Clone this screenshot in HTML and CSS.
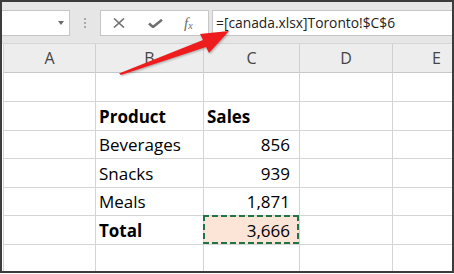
FILE: index.html
```html
<!DOCTYPE html>
<html>
<head>
  <meta charset="utf-8" />
  <title>Excel - external reference</title>
  <link rel="stylesheet" href="styles.css">
</head>
<body>
  <div class="window">
    <div class="formula-bar">
      <div class="name-box"><span class="caret"></span></div>
      <div class="grip"><i></i><i></i><i></i></div>
      <div class="fx-buttons">
        <svg class="icon-x" width="12" height="10" viewBox="0 0 12 10">
          <path d="M1 0.5 L11 9.5 M11 0.5 L1 9.5" />
        </svg>
        <svg class="icon-check" width="15" height="9" viewBox="0 0 15 9">
          <path d="M1 4.5 L5 8 L14 0.8" />
        </svg>
        <span class="fx">f<sub>x</sub></span>
      </div>
      <div class="formula">=[canada.xlsx]Toronto!$C$6</div>
    </div>

    <div class="sheet">
      <div class="row head">
        <div class="cell">A</div>
        <div class="cell">B</div>
        <div class="cell">C</div>
        <div class="cell">D</div>
        <div class="cell">E</div>
      </div>
      <div class="row">
        <div class="cell"></div><div class="cell"></div><div class="cell"></div><div class="cell"></div><div class="cell"></div>
      </div>
      <div class="row">
        <div class="cell"></div>
        <div class="cell bold">Product</div>
        <div class="cell bold">Sales</div>
        <div class="cell"></div><div class="cell"></div>
      </div>
      <div class="row short">
        <div class="cell"></div>
        <div class="cell">Beverages</div>
        <div class="cell num">856</div>
        <div class="cell"></div><div class="cell"></div>
      </div>
      <div class="row">
        <div class="cell"></div>
        <div class="cell">Snacks</div>
        <div class="cell num">939</div>
        <div class="cell"></div><div class="cell"></div>
      </div>
      <div class="row short">
        <div class="cell"></div>
        <div class="cell">Meals</div>
        <div class="cell num">1,871</div>
        <div class="cell"></div><div class="cell"></div>
      </div>
      <div class="row">
        <div class="cell"></div>
        <div class="cell bold">Total</div>
        <div class="cell num selected">3,666</div>
        <div class="cell"></div><div class="cell"></div>
      </div>
      <div class="row">
        <div class="cell"></div><div class="cell"></div><div class="cell"></div><div class="cell"></div><div class="cell"></div>
      </div>
    </div>

    <svg class="arrow" width="454" height="274" viewBox="0 0 454 274">
      <polygon points="119,73.5 203,40 200,34 229,31 209,53 206,47 121,75" />
    </svg>
  </div>
</body>
</html>
```

FILE: styles.css
```css
* {
  box-sizing: border-box;
}

body {
  margin: 0;
  background: #fff;
  font-family: "Open Sans", Arial, sans-serif;
}

.window {
  position: relative;
  width: 454px;
  height: 273px;
  border: 2px solid #3c3c3c;
  overflow: hidden;
  background: #fff;
}

/* formula bar */
.formula-bar {
  height: 42px;
  display: flex;
  align-items: flex-start;
  padding-top: 8px;
  background: #e6e6e6;
  border-bottom: 1px solid #d6d6d6;
}

.name-box {
  width: 69px;
  height: 26px;
  margin-left: -1px;
  display: flex;
  align-items: center;
  justify-content: flex-end;
  padding-right: 5px;
  background: #fff;
  border: 1px solid #c6c6c6;
}

.caret {
  width: 0;
  height: 0;
  border-left: 3.5px solid transparent;
  border-right: 3.5px solid transparent;
  border-top: 4px solid #6a6a6a;
}

.grip {
  margin-left: 14px;
  padding-top: 8px;
  display: flex;
  flex-direction: column;
  gap: 2px;
}

.grip i {
  width: 2px;
  height: 2px;
  background: #a8a8a8;
}

.fx-buttons {
  width: 109px;
  height: 26px;
  margin-left: 14px;
  display: flex;
  align-items: center;
  padding-left: 12px;
  background: #fff;
  border: 1px solid #c6c6c6;
}

.fx-buttons svg {
  fill: none;
  stroke: #707070;
}

.icon-x {
  stroke-width: 1.6;
}

.icon-check {
  margin-left: 23px;
  stroke-width: 2.6;
}

.fx {
  margin-left: 21px;
  font-family: "Liberation Serif", serif;
  font-style: italic;
  font-size: 15px;
  color: #6a6a6a;
  line-height: 1;
}

.fx sub {
  font-size: 10px;
  vertical-align: -1px;
}

.formula {
  flex: 1;
  height: 26px;
  margin-left: 3px;
  margin-right: -1px;
  padding-left: 3px;
  background: #fff;
  border: 1px solid #c6c6c6;
  font-size: 13.8px;
  line-height: 24px;
  color: #222;
  white-space: nowrap;
}

/* grid */
.sheet {
  margin-left: 1px;
  border-left: 1px solid #d4d4d4;
}

.row {
  display: grid;
  grid-template-columns: 92px 108px 96px 93px 88px;
  height: 29px;
}

.row.short {
  height: 28px;
}

.cell {
  display: flex;
  align-items: flex-end;
  padding: 0 3px 3px;
  border-right: 1px solid #d4d4d4;
  border-bottom: 1px solid #d4d4d4;
  font-size: 17px;
  line-height: 20px;
  color: #000;
}

.head {
  background: #ededed;
}

.head .cell {
  justify-content: center;
  align-items: flex-start;
  padding: 0;
  font-size: 16px;
  line-height: 28px;
  color: #444;
  border-right-color: #d0d0d0;
  border-bottom-color: #c8c8c8;
}

.bold {
  font-weight: bold;
}

.num {
  justify-content: flex-end;
  padding-right: 9px;
}

.selected {
  position: relative;
  background: #fce4d6;
}

.selected::after {
  content: "";
  position: absolute;
  top: -1px;
  left: -1px;
  right: 0;
  bottom: 0;
  background:
    repeating-linear-gradient(90deg, #217346 0 6px, transparent 6px 9px) top / 100% 2px no-repeat,
    repeating-linear-gradient(90deg, #217346 0 6px, transparent 6px 9px) bottom / 100% 2px no-repeat,
    repeating-linear-gradient(180deg, #217346 0 6px, transparent 6px 9px) left / 2px 100% no-repeat,
    repeating-linear-gradient(180deg, #217346 0 6px, transparent 6px 9px) right / 2px 100% no-repeat;
}

/* callout arrow */
.arrow {
  position: absolute;
  left: -2px;
  top: -2px;
  pointer-events: none;
  filter: drop-shadow(1px 1px 1px rgba(0, 0, 0, 0.3));
}

.arrow polygon {
  fill: #ee1c1c;
}
```
